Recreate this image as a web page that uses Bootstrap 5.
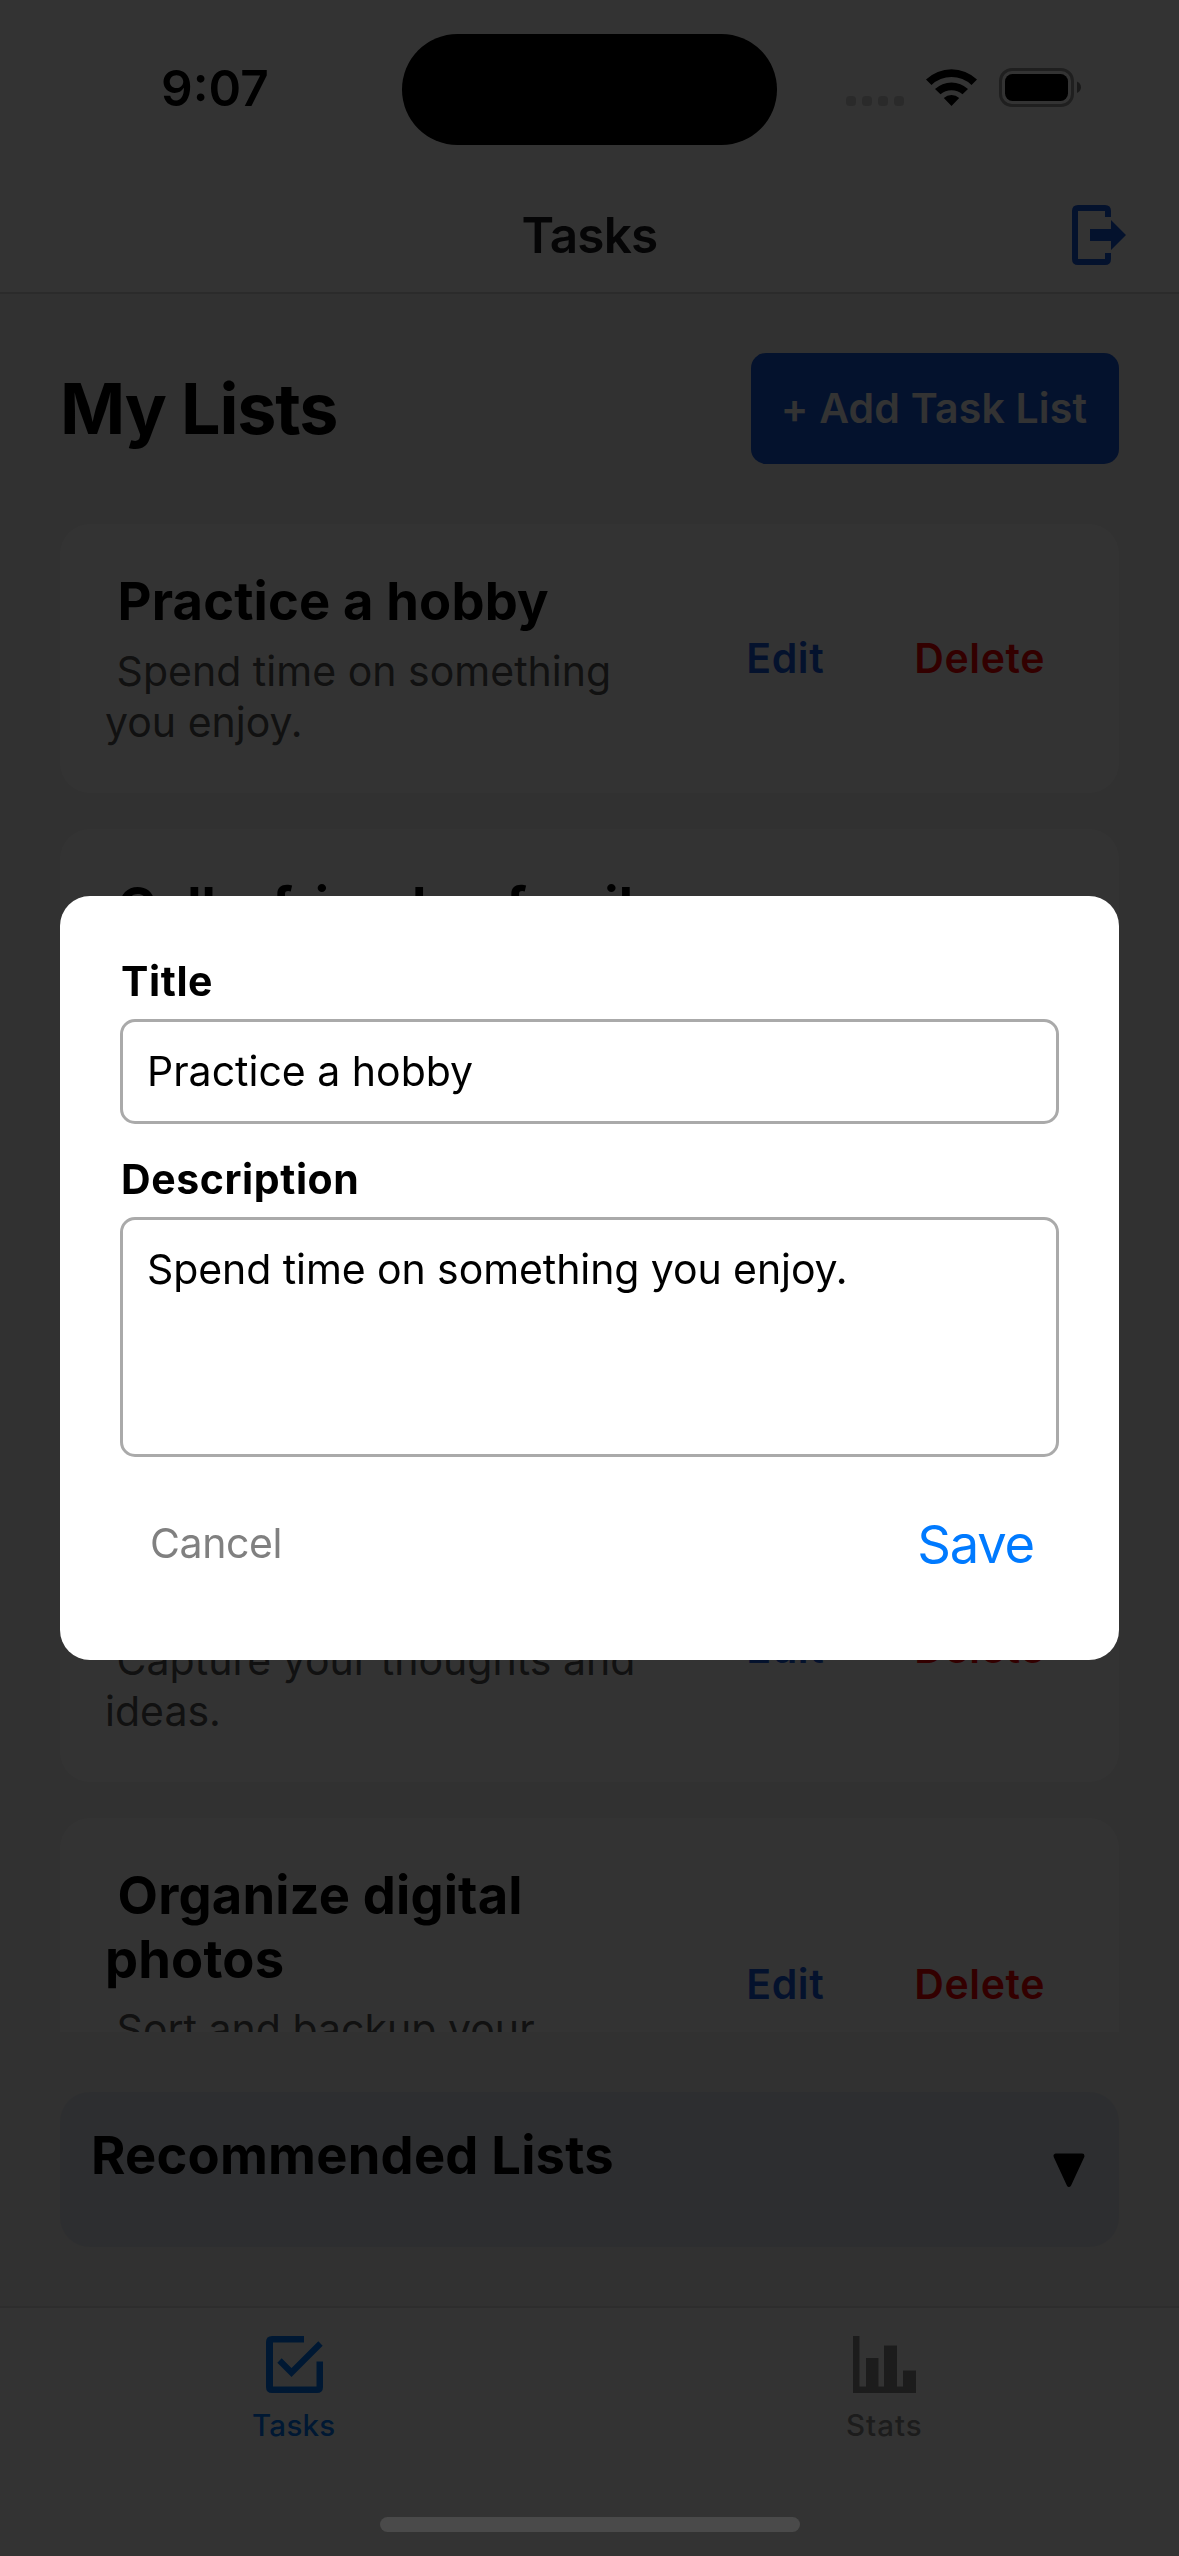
<!DOCTYPE html>
<html lang="en">
<head>
<meta charset="utf-8">
<meta name="viewport" content="width=device-width, initial-scale=1">
<title>Tasks</title>
<link href="https://cdn.jsdelivr.net/npm/bootstrap@5.3.0/dist/css/bootstrap.min.css" rel="stylesheet">
<style>
  html, body { height: 100%; }
  body { font-family: Inter, "Liberation Sans", sans-serif; color: #000; font-size: 41px; line-height: 51px; overflow: hidden; background: #f2f2f2; }
  svg { display: block; flex: none; }
  .screen { width: 1179px; height: 2556px; }
  .top-bar { height: 294px; border-bottom: 2px solid #d8d8d8; }
  .status { height: 178px; }
  .side { width: 402px; }
  .clock { font-size: 49.5px; font-weight: 600; letter-spacing: 0; padding: 0 0 2px 161px; }
  .island { width: 375px; height: 111px; background: #000; }
  .signals { padding-left: 69px; }
  .title-row { height: 114px; padding: 0 52px 0 60px; }
  .title-gap { width: 50px; }
  .nav-title { font-size: 49.5px; font-weight: 600; color: #1c1c1e; letter-spacing: -.8px; }
  .page-head { padding: 59px 60px 0; }
  .page-head h1 { font-size: 70px; line-height: 84px; font-weight: 700; letter-spacing: -1.2px; }
  .add-btn { width: 368px; height: 111px; border-radius: 15px; background: #165adf; color: #fff; font-size: 41px; font-weight: 600; padding: 0 2px 0 0; border: 0; letter-spacing: .2px; }
  .lists { margin: 60px 60px 0; height: 1508px; overflow: hidden; gap: 36px; }
  .task { border: 0; border-radius: 30px; padding: 45px; min-height: 268px; flex: none; background: #fff; }
  .task-text { width: 540px; }
  .task h2 { font-size: 52.5px; line-height: 64px; font-weight: 700; margin: 0 0 13px; letter-spacing: .15px; white-space: pre; }
  .task p { color: #555; white-space: pre-wrap; letter-spacing: .02px; }
  .act { font-size: 41px; line-height: 51px; font-weight: 600; padding: 0; border: 0; letter-spacing: .6px; }
  .act-edit { color: #165adf; margin-right: 90px; }
  .act-del { color: #f00; margin-right: 29px; }
  .is-tall { min-height: 332px; }
  .is-mid { min-height: 281px; }
  .recommended { margin: 60px 60px 0; height: 155px; border-radius: 30px; background: #e1e6f0; padding: 31px 33px 0 31px; }
  .recommended h2 { font-size: 52.5px; line-height: 64px; font-weight: 700; letter-spacing: .2px; }
  .recommended svg { margin-top: 30px; }
  .tabs { margin-top: 59px; height: 250px; border-top: 2px solid #dedede; background: #fff; padding-top: 28px; }
  .tab { font-size: 29.5px; line-height: 36px; font-weight: 500; letter-spacing: 1px; color: #8e8e8e; }
  .tab svg { margin-bottom: 14px; }
  .tab.on { color: #007aff; letter-spacing: .3px; }
  .tab.on span { padding-right: 2px; }
  .shade { background: rgba(0,0,0,.8); }
  .dialog-box { width: 1059px; height: 764px; border-radius: 30px; border: 0; padding: 60px; }
  .dialog-box label { font-weight: 700; line-height: 51px; margin-bottom: 12px; padding-left: 1px; letter-spacing: .6px; }
  .field { font-size: 41px; line-height: 51px; border: 3px solid #aaa; border-radius: 15px; color: #000; padding: 24px; resize: none; letter-spacing: -.08px; }
  .field-one { height: 105px; margin-bottom: 30px; padding: 23px 24px 25px; letter-spacing: 0; }
  .field-many { height: 240px; }
  .dlg-row { padding: 55px 25px 0 30px; }
  .btn-plain { font-size: 41px; line-height: 51px; color: #808080; border: 0; padding: 0 0 1px; letter-spacing: -.4px; }
  .btn-go { font-size: 52.5px; line-height: 64px; color: #007aff; border: 0; padding: 0; letter-spacing: -1.2px; }
  .home-bar { width: 420px; height: 15px; background: #4a4a4a; z-index: 1100; bottom: 24px; left: 380px; }
</style>
</head>
<body>
<div class="screen d-flex flex-column">
  <header class="top-bar bg-white">
    <div class="status d-flex align-items-center">
      <div class="side"><div class="clock">9:07</div></div>
      <div class="island rounded-pill"></div>
      <div class="side signals">
        <svg width="236" height="42" viewBox="846 68 236 42">
          <g fill="#000" fill-opacity=".18"><rect x="846" y="96" width="10" height="10" rx="3.5"/><rect x="862" y="96" width="10" height="10" rx="3.5"/><rect x="878" y="96" width="10" height="10" rx="3.5"/><rect x="894" y="96" width="10" height="10" rx="3.5"/></g>
          <path d="M926 79.500A37 37 0 0 1 977 79.500L971.500 85A29 29 0 0 0 931.500 85ZM935 89A24 24 0 0 1 968 89L962.500 94.300A17 17 0 0 0 940.500 94.300ZM943.800 98A11.500 11.500 0 0 1 959.200 98L951.500 106Z"/>
          <rect x="1000.500" y="69.500" width="72" height="36" rx="11.500" fill="none" stroke="#000" stroke-opacity=".4" stroke-width="3"/>
          <rect x="1005" y="74" width="63" height="27" rx="7.500"/>
          <path d="M1077 81.500C1079.500 82.500 1081 84.700 1081 87.200S1079.500 92 1077 93Z" fill-opacity=".5"/>
        </svg>
      </div>
    </div>
    <div class="title-row d-flex align-items-center">
      <span class="title-gap"></span>
      <div class="nav-title flex-fill text-center">Tasks</div>
      <svg width="58" height="60" viewBox="1069 205 58 60" fill="#165adf"><path d="M1078 205H1105Q1111 205 1111 211V217H1105V211H1078V259H1105V253H1111V259Q1111 265 1105 265H1078Q1072 265 1072 259V211Q1072 205 1078 205ZM1090 229H1111V220L1126 235L1111 250V241H1090Z"/></svg>
    </div>
  </header>

  <main class="flex-fill">
    <div class="page-head d-flex justify-content-between align-items-center">
      <h1 class="mb-0">My Lists</h1>
      <button class="btn add-btn">+ Add Task List</button>
    </div>
    <section class="lists d-flex flex-column">
      <article class="card task flex-row align-items-center justify-content-between">
        <div class="task-text align-self-start"><h2> Practice a hobby</h2><p class="mb-0"> Spend time on something you enjoy.</p></div>
        <div class="d-flex"><button class="btn act act-edit">Edit</button><button class="btn act act-del">Delete</button></div>
      </article>
      <article class="card task is-tall flex-row align-items-center justify-content-between">
        <div class="task-text align-self-start"><h2> Call a friend or family</h2></div>
      </article>
      <article class="card task is-mid"></article>
      <article class="card task flex-row align-items-center justify-content-between">
        <div class="task-text align-self-end"><p class="mb-0"> Capture your thoughts and ideas.</p></div>
        <div class="d-flex"><button class="btn act act-edit">Edit</button><button class="btn act act-del">Delete</button></div>
      </article>
      <article class="card task is-tall flex-row align-items-center justify-content-between">
        <div class="task-text align-self-start"><h2> Organize digital
photos</h2><p class="mb-0"> Sort and backup your</p></div>
        <div class="d-flex"><button class="btn act act-edit">Edit</button><button class="btn act act-del">Delete</button></div>
      </article>
    </section>
    <section class="recommended d-flex justify-content-between align-items-start">
      <h2 class="mb-0">Recommended Lists</h2>
      <svg width="34" height="36" viewBox="0 0 34 36"><path d="M3 2.500H31L17 32Z" stroke="#000" stroke-width="5" stroke-linejoin="round" transform="translate(1 .5) scale(.94 .97)"/></svg>
    </section>
  </main>

  <nav class="tabs d-flex">
    <div class="tab on w-50 d-flex flex-column align-items-center">
      <svg width="57" height="57" viewBox="266 2336.500 57 57" fill="#007aff"><path d="M272 2336.500H304V2343H273V2387H316.500V2362H323V2387.500Q323 2393.500 317 2393.500H272Q266 2393.500 266 2387.500V2342.500Q266 2336.500 272 2336.500Z"/><path d="M279.500 2361L291.500 2373L320.500 2344" fill="none" stroke="#007aff" stroke-width="6.200"/></svg>
      <span>Tasks</span>
    </div>
    <div class="tab w-50 d-flex flex-column align-items-center">
      <svg width="63" height="57" viewBox="853 2336.500 63 57" fill="#8e8e8e"><path d="M853 2336.500H859.500V2387H866V2358.500H878.500V2387H884V2346H897V2387H903V2371H916V2393.500H853Z"/></svg>
      <span>Stats</span>
    </div>
  </nav>
</div>

<div class="modal d-block shade" tabindex="-1">
  <div class="d-flex h-100 align-items-center justify-content-center">
    <form class="modal-content dialog-box">
      <label for="t">Title</label>
      <input id="t" class="form-control field field-one" value="Practice a hobby">
      <label for="d">Description</label>
      <textarea id="d" class="form-control field field-many">Spend time on something you enjoy.</textarea>
      <div class="dlg-row d-flex justify-content-between align-items-center">
        <button type="button" class="btn btn-plain">Cancel</button>
        <button type="button" class="btn btn-go">Save</button>
      </div>
    </form>
  </div>
</div>
<div class="home-bar position-fixed rounded-pill"></div>
<script src="https://cdn.jsdelivr.net/npm/bootstrap@5.3.0/dist/js/bootstrap.bundle.min.js"></script>
</body>
</html>
